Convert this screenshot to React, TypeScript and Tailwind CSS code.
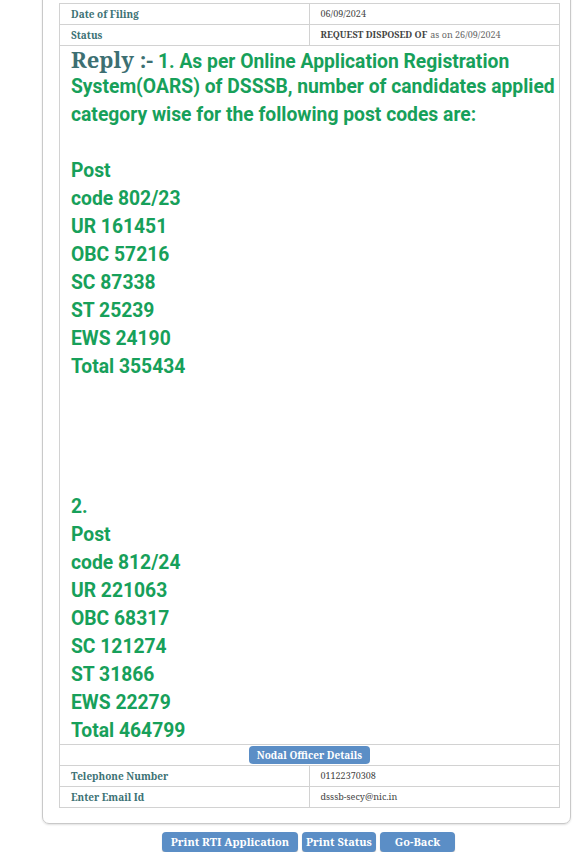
import React from "react";

const serif = "font-['Noto_Serif','DejaVu_Serif',serif]";
const sans = "font-['Roboto','Liberation_Sans',sans-serif]";
const green = "text-[19.3px] font-bold text-[#17a05a]";

const replyLines: string[] = [
  "",
  "Post",
  "code 802/23",
  "UR 161451",
  "OBC 57216",
  "SC 87338",
  "ST 25239",
  "EWS 24190",
  "Total 355434",
  "",
  "",
  "",
  "",
  "2.",
  "Post",
  "code 812/24",
  "UR 221063",
  "OBC 68317",
  "SC 121274",
  "ST 31866",
  "EWS 22279",
  "Total 464799",
];

function Row({ label, children }: { label: string; children: React.ReactNode }) {
  return (
    <div className="flex border-t border-[#d2d2d2] h-[21px]">
      <div className={`${serif} w-1/2 border-r border-[#d2d2d2] pl-[11px] flex items-center text-[10px] font-bold text-[#3d7275]`}>
        {label}
      </div>
      <div className={`${serif} w-1/2 pl-[11px] flex items-center text-[9px] text-[#444]`}>{children}</div>
    </div>
  );
}

function BlueButton({ children, className }: { children: React.ReactNode; className: string }) {
  return (
    <button
      className={`${serif} ${className} h-[20px] rounded-[4px] bg-[#5b8ec6] text-[11px] font-bold text-white shadow-[0_1px_1px_rgba(0,0,0,0.25)]`}
    >
      {children}
    </button>
  );
}

export default function App() {
  return (
    <div className="min-h-screen bg-white">
      <div className="-mt-[13px] ml-[42px] w-[529px] rounded-b-[7px] border border-[#c9c9c9] pt-[15px] pb-[15px] pl-[16px] pr-[11px] shadow-[0_1px_2px_rgba(0,0,0,0.12)]">
        <div className="w-[501px] border-x border-b border-[#d2d2d2]">
          <Row label="Date of Filing">06/09/2024</Row>
          <Row label="Status">
            <span className="font-bold">REQUEST DISPOSED OF</span>
            <span className="ml-[3px] text-[#666]">as on 26/09/2024</span>
          </Row>
          <div className="border-t border-[#d2d2d2] pl-[11px] leading-[28px]">
            <div className="-mt-[1px] flex h-[28px] items-baseline whitespace-nowrap">
              <span className={`${serif} text-[22px] leading-[28px] font-bold text-[#3d6f72]`}>Reply :-</span>
              <span className={`${sans} ${green} leading-[28px] whitespace-pre`}> 1. As per Online Application Registration</span>
            </div>
            <div className={`${sans} ${green} h-[28px] whitespace-nowrap`}>
              System(OARS) of DSSSB, number of candidates applied
            </div>
            <div className={`${sans} ${green} h-[28px] whitespace-nowrap`}>
              category wise for the following post codes are:
            </div>
            {replyLines.map((line, i) => (
              <div key={i} className={`${sans} ${green} h-[28px]`}>
                {line}
              </div>
            ))}
          </div>
          <div className="-mt-[1px] flex h-[21px] items-center justify-center border-t border-[#d2d2d2]">
            <span className={`${serif} rounded-[4px] bg-[#5b8ec6] px-[8px] leading-[18px] text-[10px] font-bold text-white`}>
              Nodal Officer Details
            </span>
          </div>
          <Row label="Telephone Number">01122370308</Row>
          <Row label="Enter Email Id">dsssb-secy@nic.in</Row>
        </div>
      </div>
      <div className="ml-[42px] mt-[8px] flex w-[529px] justify-center gap-[4px] pl-[4px]">
        <BlueButton className="w-[136px]">Print RTI Application</BlueButton>
        <BlueButton className="w-[74px]">Print Status</BlueButton>
        <BlueButton className="w-[75px]">Go-Back</BlueButton>
      </div>
    </div>
  );
}
